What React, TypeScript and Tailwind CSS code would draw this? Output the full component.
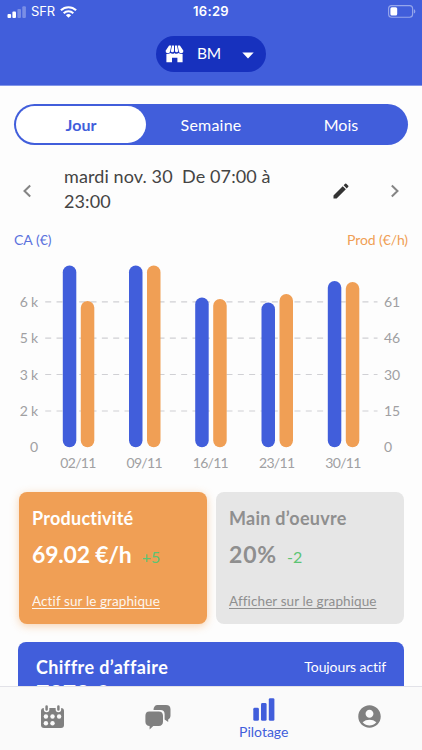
import React from "react";
import { MdAccountCircle, MdEdit } from "react-icons/md";

const BLUE = "#415edb";
const ORANGE = "#f09f55";

const series = [
  { day: "02/11", x: 62.8, ca: 265.5, prod: 301 },
  { day: "09/11", x: 129, ca: 265.5, prod: 265.5 },
  { day: "16/11", x: 195.2, ca: 297.5, prod: 299 },
  { day: "23/11", x: 261.5, ca: 302.5, prod: 294 },
  { day: "30/11", x: 327.8, ca: 281, prod: 282 },
];
const rows = [
  { y: 301.8, left: "6 k", right: "61" },
  { y: 338.2, left: "5 k", right: "46" },
  { y: 374.5, left: "3 k", right: "30" },
  { y: 411, left: "2 k", right: "15" },
  { y: 447.4, left: "0", right: "0" },
];

function StatusBar() {
  return (
    <div className="flex h-6 items-center px-[7px] font-['Inter',sans-serif] text-[13px] text-white">
      <div className="flex flex-1 items-center">
        <svg width="19" height="14" viewBox="0 0 19 14" fill="#fff">
          <rect x="0.5" y="9" width="3.6" height="4" rx="1" />
          <rect x="5.4" y="6.5" width="3.6" height="6.5" rx="1" />
          <rect x="10.4" y="4" width="3.6" height="9" rx="1" opacity=".3" />
          <rect x="15.3" y="1.3" width="3.6" height="11.7" rx="1" opacity=".3" />
        </svg>
        <span className="ml-[5px] tracking-[-0.1px]">SFR</span>
        <svg className="ml-[5px]" width="17" height="12" viewBox="0 0 17 12" fill="none" stroke="#fff" strokeWidth="2.1">
          <path d="M.9 4.3a11 11 0 0 1 15.2 0" />
          <path d="M3.7 7.2a7 7 0 0 1 9.6 0" />
          <path d="M8.5 11.8 5.9 9.2a3.8 3.8 0 0 1 5.2 0z" fill="#fff" stroke="none" />
        </svg>
      </div>
      <span className="font-semibold tracking-[0.3px]">16:29</span>
      <div className="flex flex-1 justify-end">
        <svg className="-mr-px -mt-px" width="28" height="13" viewBox="0 0 28 13">
          <rect x=".6" y=".6" width="24" height="11.6" rx="3" fill="none" stroke="#fff" strokeOpacity=".45" strokeWidth="1.1" />
          <rect x="2.4" y="2.2" width="6.8" height="8.4" rx="1.5" fill="#fff" />
          <path d="M25.8 4.3v4.2c1-.4 1.5-1.2 1.5-2.1s-.5-1.7-1.5-2.1z" fill="#fff" opacity=".45" />
        </svg>
      </div>
    </div>
  );
}

function StoreIcon() {
  return (
    <svg width="19" height="18" viewBox="0 0 19 18" fill="#fff">
      <path d="M4.1.5h2.2L5.1 6.3a2.2 2.2 0 0 1-4.5-.5z" />
      <path d="M7.1.5h1.9v5.7a1.7 1.7 0 0 1-3.2 0z" />
      <path d="M10 .5h1.9l1.3 5.7a1.7 1.7 0 0 1-3.2 0z" />
      <path d="M12.7.5h2.2l3.5 5.3a2.2 2.2 0 0 1-4.5.5z" />
      <path d="M1.4 9c1.5.3 2.8 0 3.9-1 1.2 1 3 1.2 4.2 0 1.2 1.2 3 1 4.2 0 1.1 1 2.4 1.3 3.9 1v8.200h-5.200v-4.500H7v4.500H1.400z" />
    </svg>
  );
}

function Chart() {
  return (
    <svg className="block h-[232px] w-[422px] font-['Lato',sans-serif]" viewBox="0 250 422 232" fill="#a0a0a2" fontSize="14">
      {rows.map((r) => (
        <g key={r.y}>
          {r.left !== "0" && (
            <line x1="45.2" x2="377.5" y1={r.y} y2={r.y} stroke="#d0d0d4" strokeWidth="1.2" strokeDasharray="6 5.33" />
          )}
          <text x="38" y={r.y + 5} textAnchor="end" letterSpacing="-0.2">{r.left}</text>
          <text x="384" y={r.y + 5} letterSpacing="-0.2">{r.right}</text>
        </g>
      ))}
      {series.map((s) => (
        <g key={s.day}>
          <rect x={s.x} y={s.ca} width="13.5" height={447.3 - s.ca} rx="6.75" fill={BLUE} />
          <rect x={s.x + 18} y={s.prod} width="13.5" height={447.3 - s.prod} rx="6.75" fill={ORANGE} />
          <text x={s.x + 15.2} y="468" textAnchor="middle" letterSpacing="-0.7">{s.day}</text>
        </g>
      ))}
    </svg>
  );
}

function KpiCard(props: { title: string; value: string; delta: string; link: string; active?: boolean }) {
  return (
    <div
      className={
        "h-[132px] flex-1 whitespace-nowrap rounded-lg pl-[13.5px] pt-[14px] " +
        (props.active
          ? "bg-[#f09f55] text-white shadow-[0_2px_9px_rgba(240,159,85,0.45)]"
          : "bg-[#e6e6e6] text-[#8f8f8f]")
      }
    >
      <div className="text-[18px] font-bold leading-6 tracking-[0.25px]">{props.title}</div>
      <div className="mt-[9px] flex items-baseline leading-[30px]">
        <span className={"text-[23px] font-bold " + (props.active ? "tracking-[-0.2px]" : "tracking-[0.8px]")}>{props.value}</span>
        <span className="ml-[10px] text-[16px] text-[#5cc473]">{props.delta}</span>
      </div>
      <div className={"mt-[19px] text-[13.5px] leading-5 tracking-[0.1px] underline underline-offset-2 " + (props.active ? "opacity-90" : "")}>{props.link}</div>
    </div>
  );
}

export default function App() {
  return (
    <div className="flex h-[750px] w-[422px] flex-col overflow-hidden bg-[#fdfdfd] font-['Lato',sans-serif] [font-variant-ligatures:none]">
      <header className="flex h-[86px] shrink-0 flex-col border-b border-[#8296e8] bg-[#415edb]">
        <StatusBar />
        <button className="ml-[156px] mt-3 flex h-9 w-[110px] items-center rounded-full bg-[#1731be] pl-[9px] text-white">
          <StoreIcon />
          <span className="ml-[13px] w-6 text-[15.5px] tracking-[-0.3px]">BM</span>
          <svg className="ml-[21px] mt-0.5" width="12" height="7" viewBox="0 0 12 7"><path d="M.3.5h11.400L6 6.500z" fill="#fff" /></svg>
        </button>
      </header>

      <main className="min-h-0 flex-1 overflow-hidden">
        <div className="ml-[14px] mt-[18px] flex h-[41px] w-[394px] rounded-full bg-[#415edb] p-[2px] text-[16px] text-white">
          <div className="flex w-[130px] items-center justify-center rounded-full bg-white font-bold text-[#415edb]">Jour</div>
          <div className="flex w-[130px] items-center justify-center tracking-[0.2px]">Semaine</div>
          <div className="flex w-[130px] items-center justify-center">Mois</div>
        </div>

        <div className="mt-[19px] flex h-[50px] items-center pl-[22px] text-[#444]">
          <svg className="mt-1" width="10" height="14" viewBox="0 0 10 14" fill="none" stroke="#858585" strokeWidth="2"><path d="M8.200 1.500 2.500 7l5.700 5.500" /></svg>
          <div className="ml-8 w-[240px] whitespace-pre text-[18px] leading-[25px] tracking-[0.1px]">{"mardi nov. 30  De 07:00 à\n23:00"}</div>
          <MdEdit className="ml-[27px] mt-1 size-5 text-[#333]" />
          <svg className="ml-[39px] mt-1" width="10" height="14" viewBox="0 0 10 14" fill="none" stroke="#858585" strokeWidth="2"><path d="m1.800 1.500 5.700 5.500-5.700 5.500" /></svg>
        </div>

        <div className="mb-px mt-[15px] flex h-5 items-center justify-between px-[14px] text-[14px]">
          <span className="text-[#5b72dd]">CA (€)</span>
          <span className="tracking-[-0.1px] text-[#f09f55]">Prod (€/h)</span>
        </div>

        <Chart />

        <div className="mt-[10px] flex gap-[9px] px-[18.5px]">
          <KpiCard active title="Productivité" value="69.02 €/h" delta="+5" link="Actif sur le graphique" />
          <KpiCard title="Main d’oeuvre" value="20%" delta="-2" link="Afficher sur le graphique" />
        </div>

        <div className="mx-[18px] mt-[18px] h-[120px] rounded-lg bg-[#415edb] px-[18px] pt-[13px] text-white">
          <div className="flex items-center justify-between leading-6">
            <span className="text-[18px] font-bold tracking-[0.4px]">Chiffre d’affaire</span>
            <span className="text-[14px] tracking-[-0.1px]">Toujours actif</span>
          </div>
          <div className="-mt-px text-[23px] font-bold leading-[30px]">7273 €</div>
        </div>
      </main>

      <nav className="flex h-16 shrink-0 border-t border-[#e2e2e8] bg-[#fafafa]">
        <div className="flex w-[105.5px] justify-center pt-[18px]">
          <svg width="23" height="23" viewBox="0 0 23 23">
            <rect y="3" width="23" height="20" rx="3" fill="#808080" />
            <g fill="#808080" stroke="#fafafa" strokeWidth="1.5">
              <rect x="3.6" y="-.6" width="4" height="7.2" rx="2" />
              <rect x="15.4" y="-.6" width="4" height="7.2" rx="2" />
            </g>
            <g fill="#fafafa">
              <circle cx="4.9" cy="11.5" r="2.2" /><circle cx="11.5" cy="11.5" r="2.2" /><circle cx="18.1" cy="11.5" r="2.2" />
              <circle cx="4.9" cy="18.2" r="2.2" /><circle cx="11.5" cy="18.2" r="2.2" />
            </g>
          </svg>
        </div>
        <div className="flex w-[105.5px] justify-center pt-[18px]">
          <svg width="26" height="25" viewBox="0 0 26 25" fill="#808080">
            <path d="M8.500 5C8.500 2 10 0 12.500 0H21c3 0 4.500 1.500 4.500 4.200v6.300c0 2-.8 3.200-2.300 3.900v2.700l-3.600-2.600V9c0-2.700-1.500-4-4-4z" />
            <path d="M4.200 6.600h9.600c2.600 0 4.200 1.500 4.200 4.200v6c0 2.600-1.600 4.200-4.200 4.200H8.300L4.600 24.500V21C2 21 .4 19.300.4 16.800v-6c0-2.700 1.400-4.200 3.800-4.200z" />
          </svg>
        </div>
        <div className="flex w-[105.5px] flex-col items-center pt-[11px] text-[#415edb]">
          <svg width="22" height="23" viewBox="0 0 22 23" fill={BLUE}>
            <rect x=".3" y="9.8" width="5.6" height="13" rx="1.4" />
            <rect x="8" y="5" width="5.6" height="17.8" rx="1.4" />
            <rect x="15.8" y=".2" width="5.6" height="22.6" rx="1.4" />
          </svg>
          <span className="mt-px text-[14px] leading-5">Pilotage</span>
        </div>
        <div className="flex w-[105.5px] justify-center pt-4">
          <MdAccountCircle className="size-[27px] text-[#808080]" />
        </div>
      </nav>
    </div>
  );
}
